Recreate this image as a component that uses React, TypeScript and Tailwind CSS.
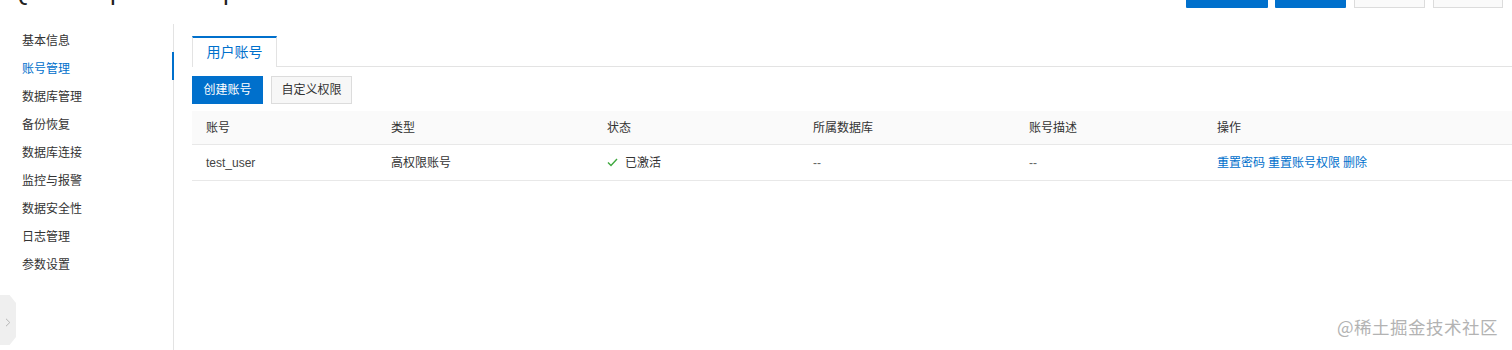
import React from "react";

const menu = ["基本信息", "账号管理", "数据库管理", "备份恢复", "数据库连接", "监控与报警", "数据安全性", "日志管理", "参数设置"];

const cols = [
  { title: "账号", w: "w-[185px]" },
  { title: "类型", w: "w-[216px]" },
  { title: "状态", w: "w-[206px]" },
  { title: "所属数据库", w: "w-[216px]" },
  { title: "账号描述", w: "w-[188px]" },
  { title: "操作", w: "flex-1" },
];

export default function App() {
  return (
    <div
      className="relative h-[350px] w-[1512px] overflow-hidden bg-white text-[12px] text-[#333]"
      style={{ fontFamily: '"Liberation Sans", "Noto Sans CJK SC", sans-serif' }}
    >
      {/* header (cut off at top) */}
      <div className="flex h-[24px] items-start overflow-hidden">
        <div className="ml-[10px] mt-[-22px] flex text-[26px] leading-[26px] text-[#222]">
          <span className="w-[100px]">Q</span>
          <span className="w-[113px]">p</span>
          <span>p</span>
        </div>
        <div className="ml-auto mr-[9px] mt-[-24px] flex gap-[7px]">
          <div className="h-[32px] w-[82px] rounded-[1px] bg-[#0070cc]" />
          <div className="h-[32px] w-[71px] rounded-[1px] bg-[#0070cc]" />
          <div className="ml-[1px] h-[32px] w-[71px] border border-[#dcdcdc] bg-[#fafafa]" />
          <div className="ml-[1px] h-[32px] w-[70px] border border-[#dcdcdc] bg-[#fafafa]" />
        </div>
      </div>

      <div className="flex h-[326px]">
        {/* sidebar */}
        <div className="w-[174px] shrink-0 border-r border-[#e3e3e3] pt-[3px]">
          {menu.map((m, i) => (
            <div
              key={m}
              className={`relative flex h-[28px] items-center pl-[22px] ${i === 1 ? "text-[#0070cc]" : "text-[#333]"}`}
            >
              {m}
              {i === 1 && <div className="absolute right-[-1px] top-[-3px] h-[28px] w-[2px] bg-[#0070cc]" />}
            </div>
          ))}
        </div>

        {/* content */}
        <div className="flex-1 pl-[18px] pt-[12px]">
          <div className="flex">
            <div className="flex h-[31px] w-[85px] items-center justify-center border-x border-t-2 border-x-[#e3e3e3] border-t-[#0070cc] bg-white text-[14px] text-[#0070cc]">
              用户账号
            </div>
            <div className="flex-1 border-b border-[#e3e3e3]" />
          </div>

          <div className="mt-[9px] flex gap-[8px]">
            <button className="h-[28px] w-[71px] bg-[#0070cc] text-[12px] text-white">创建账号</button>
            <button className="h-[28px] w-[81px] border border-[#dcdcdc] bg-[#f7f7f7] text-[12px] text-[#333]">自定义权限</button>
          </div>

          <div className="mt-[7px]">
            <div className="flex h-[34px] items-center border-b border-[#e8e8e8] bg-[#fafafa]">
              {cols.map((c) => (
                <div key={c.title} className={`${c.w} pl-[14px]`}>
                  {c.title}
                </div>
              ))}
            </div>
            <div className="flex h-[36px] items-center border-b border-[#e8e8e8]">
              <div className="w-[185px] pl-[14px] text-[#444]">test_user</div>
              <div className="w-[216px] pl-[14px]">高权限账号</div>
              <div className="flex w-[206px] items-center gap-[7px] pl-[14px]">
                <svg width="11" height="9" viewBox="0 0 11 9" fill="none">
                  <path d="M1 4.5 L4 7.5 L10 1" stroke="#3ea83e" strokeWidth="1.4" />
                </svg>
                <span>已激活</span>
              </div>
              <div className="w-[216px] pl-[14px] text-[#666]">--</div>
              <div className="w-[188px] pl-[14px] text-[#666]">--</div>
              <div className="flex flex-1 gap-[3px] pl-[14px] text-[#0070cc]">
                <span>重置密码</span>
                <span>重置账号权限</span>
                <span>删除</span>
              </div>
            </div>
          </div>
        </div>
      </div>

      {/* collapse handle */}
      <div className="absolute left-0 top-[295px] flex h-[50px] w-[16px] items-center justify-center bg-[#efefef] pt-[4px] [clip-path:polygon(0_0,60%_0,100%_16%,100%_84%,60%_100%,0_100%)]">
        <svg width="6" height="9" viewBox="0 0 6 9" fill="none">
          <path d="M1 0.8 L4.8 4.5 L1 8.2" stroke="#b5b5b5" strokeWidth="1" />
        </svg>
      </div>

      {/* watermark */}
      <div
        className="absolute right-[14px] top-[315px] text-[17.5px] leading-[24px] tracking-[0.5px] text-[#b3b3b3]"
        style={{ fontFamily: '"Noto Sans CJK SC", sans-serif' }}
      >
        @稀土掘金技术社区
      </div>
    </div>
  );
}
